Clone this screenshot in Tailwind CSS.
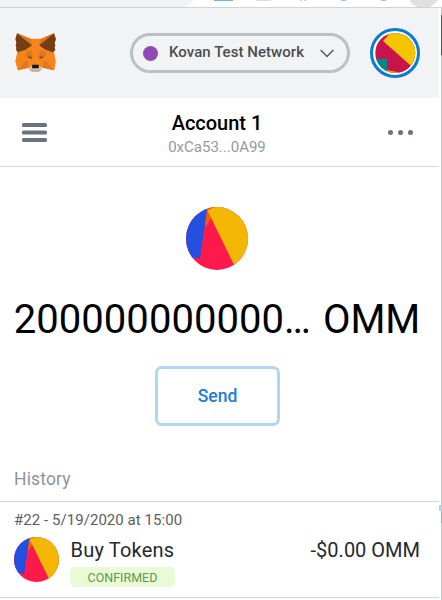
<!DOCTYPE html>
<html lang="en">
<head>
<meta charset="utf-8">
<title>Wallet</title>
<script src="https://cdn.jsdelivr.net/npm/@tailwindcss/browser@4"></script>
</head>
<body class="w-[442px] h-[600px] overflow-hidden bg-white font-[Roboto,sans-serif] text-black">
<svg width="0" height="0" class="absolute">
  <defs>
    <clipPath id="disc"><circle cx="31" cy="31" r="31"/></clipPath>
    <symbol id="token" viewBox="0 0 62 62" preserveAspectRatio="none">
      <g clip-path="url(#disc)">
        <path fill="#ff1a4b" d="M0 0h62v62H0z"/>
        <path fill="#fa5c07" d="M18 0h16v6l-9 5-6 9z"/>
        <path fill="#2350e0" d="M0 0h21.500L14 51 0 49z"/>
        <path fill="#f3b602" d="M21.500 3.500 35 -3H62V62H50.500z"/>
      </g>
    </symbol>
  </defs>
</svg>
<div class="flex flex-col w-full h-full">
  <div class="h-2 shrink-0 overflow-hidden border-b border-[#d2d3d4]">
    <svg class="block" width="442" height="7">
      <path d="M0 0h194q-3 5-9 7H0z" fill="#f1f3f4"/>
      <path d="M214 0h19v1h-19z" fill="#7ca8f3"/>
      <path d="M256 0h15v1h-15z" fill="#dedede"/>
      <path d="M300 0h2v1h-2zM304 0h2v1h-2z" fill="#d7c5ed"/>
      <path d="M341 0h5v1h-5z" fill="#7fd8c4"/>
      <path d="M381 0h5v1h-5z" fill="#bdbdbd"/>
      <circle cx="423.500" cy="-9" r="17" fill="#e0e0e0"/>
    </svg>
  </div>
  <div class="flex flex-1 min-h-0">
    <main class="w-[439px] shrink-0 flex flex-col">
      <header class="h-[90px] shrink-0 bg-[#f2f3f4] flex items-center pl-[15px] pr-[19px]">
        <svg class="-mt-[1px]" width="41" height="39" viewBox="45 100 123 117">
          <path fill="#f6851b" d="M51 101l41 16h31l39-16 0 55 5 29-5 27-30-7H83l-29 7-8-27 6-29z"/>
          <path fill="#e2761b" d="M51 101l41 16 5 19zM162 101l-39 16-6 19z"/>
          <path fill="#763d16" d="M51 101l45 36-19 13-23 8-6-7 1-8-2-7 2-6-3-12zM162 101l-45 36 19 13 23 8 7-7-2-8 2-7-2-6 4-12z"/>
          <path fill="#e4761b" d="M54 185h28l2 19-30 8zM160 185h-29l-2 19 33 8z"/>
          <path fill="#f6851b" d="M47 185h29l-22 27zM167 185h-29l24 27z"/>
          <path fill="#e2761b" d="M78 155l16-3 4 20-22-5zM136 155l-16-3-4 20 22-5z"/>
          <path fill="#d86a1a" d="M78 166l17 3 2 9-15-4zM136 166l-17 3-2 9 15-4z"/>
          <path fill="#4a5360" d="M85 170l9 3 2 5-8-2zM129 170l-9 3-2 5 8-2z"/>
          <path fill="#d7c1b3" d="M83 205l14-7h20l12 7-12 11H95z"/>
          <path fill="#c0ad9e" d="M86 208l10 2h21l9-2-9 8H95z"/>
          <path fill="#161616" d="M97 195h19l1 11H96z"/>
        </svg>
        <div class="ml-[74px] mt-[15px] mb-[15px] w-[220px] h-10 rounded-full border-3 border-[#bbc0c5] flex items-center pl-[10px] pr-[13px]">
          <span class="size-[15px] rounded-full bg-[#9149b5]"></span>
          <span class="ml-[11px] -mt-[3px] text-[15px] leading-5 font-medium tracking-[0.05px] text-[#4d4d4d] whitespace-nowrap">Kovan Test Network</span>
          <svg class="ml-auto" width="14" height="9" viewBox="0 0 14 9" fill="none" stroke="#555" stroke-width="1.400"><path d="M.7.900 7 7.500 13.300.900"/></svg>
        </div>
        <svg class="ml-auto" width="50" height="50" viewBox="0 0 50 50">
          <defs><clipPath id="avatar"><circle cx="25.300" cy="25" r="20"/></clipPath></defs>
          <circle cx="25" cy="25" r="23.500" fill="#fff" stroke="#037dd6" stroke-width="3"/>
          <g clip-path="url(#avatar)">
            <path fill="#c8144c" d="M5 5h41v41H5z"/>
            <path fill="#f5c400" d="M13 13 22 3H48V44z"/>
            <path fill="#03898c" d="M5 31h12v15H5z"/>
            <path fill="#f99c05" d="M17 42l15 3v2H17z"/>
          </g>
        </svg>
      </header>
      <section class="h-[69px] shrink-0 border-b border-[#d6d8da] flex items-center pl-[22px] pr-[26px]">
        <svg width="25" height="19" viewBox="0 0 25 19" fill="#6a737d"><rect width="25" height="4" rx="1.500"/><rect y="7.500" width="25" height="4" rx="1.500"/><rect y="15" width="25" height="4" rx="1.500"/></svg>
        <div class="flex-1 text-center pt-[5px] pr-[1px]">
          <div class="text-[20px] leading-[25px] font-medium">Account 1</div>
          <div class="text-[15px] leading-[22px] text-[#989a9b]">0xCa53...0A99</div>
        </div>
        <svg width="25" height="5" viewBox="0 0 25 5" fill="#6a737d"><circle cx="2.500" cy="2.500" r="2.500"/><circle cx="12.500" cy="2.500" r="2.500"/><circle cx="22.500" cy="2.500" r="2.500"/></svg>
      </section>
      <section class="h-[278px] shrink-0 flex flex-col items-center pt-[40px]">
        <svg class="shrink-0 mr-[5px]" width="62" height="63"><use href="#token"/></svg>
        <div class="mt-[20px] mr-[5px] flex gap-[12px] text-[40px] leading-[60px] whitespace-nowrap"><span class="tracking-[0.050px]">200000000000…</span><span>OMM</span></div>
        <button class="mt-[16px] mr-[4px] w-[125px] h-[60px] shrink-0 rounded-[7px] border-3 border-[#b0d7f2] text-[17.500px] font-medium text-[#1c7ed6]">Send</button>
      </section>
      <h2 class="h-[57px] shrink-0 border-b border-[#d6d8da] pl-[14px] pt-[22px] text-[17.500px] leading-6 tracking-[0.150px] text-[#8d959d]">History</h2>
      <section class="h-[96px] shrink-0 border-b border-[#d6d8da] pl-[14px] pr-[19px] pt-[8px]">
        <div class="text-[15px] leading-5 tracking-[0.050px] text-[#5d5d5d]">#22 - 5/19/2020 at 15:00</div>
        <div class="flex mt-[7px]">
          <svg width="45" height="45"><use href="#token"/></svg>
          <div class="ml-[11px]">
            <div class="pl-[0.500px] text-[20px] leading-[26px] tracking-[0.200px] text-[#24292e]">Buy Tokens</div>
            <div class="mt-1 w-[105px] h-5 rounded-[5px] bg-[#eafad7] text-[12.500px] leading-[21px] text-center text-[#609a47]">CONFIRMED</div>
          </div>
          <div class="ml-auto text-[20px] leading-[26px] text-[#24292e]">-$0.00 OMM</div>
        </div>
      </section>
    </main>
    <aside class="flex-1 flex justify-end">
      <div class="w-px h-full flex flex-col bg-[#c7c8ca]">
        <div class="h-[7px] shrink-0"></div>
        <div class="h-[40px] shrink-0 bg-[#555]"></div>
        <div class="h-[450px] shrink-0"></div>
        <div class="relative h-[18px] shrink-0 bg-[#94a7b5]"><span class="absolute -left-[2px] top-0 w-[3px] h-[6px] bg-[#add8e6]"></span></div>
      </div>
    </aside>
  </div>
</div>
</body>
</html>
